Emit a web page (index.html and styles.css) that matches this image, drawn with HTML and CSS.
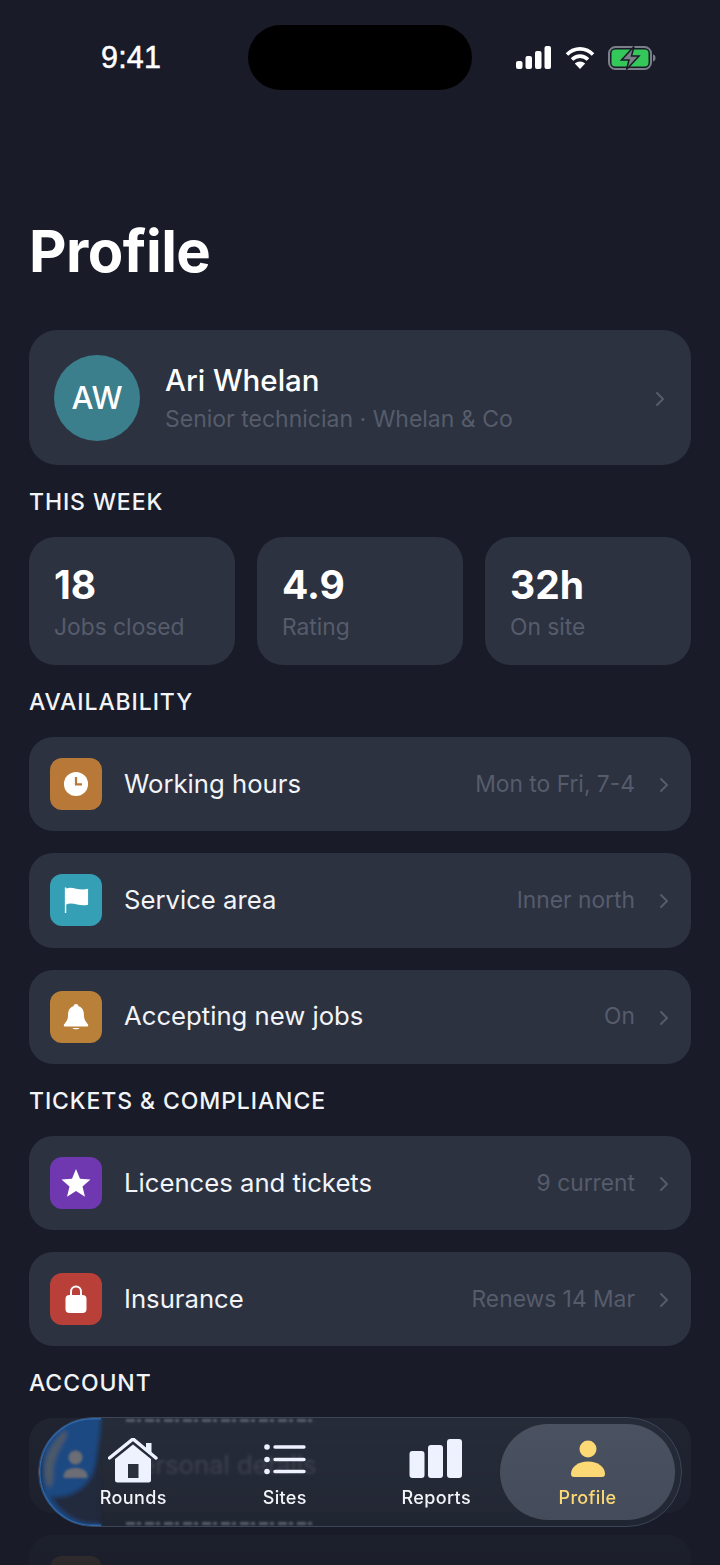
FILE: index.html
```html
<!DOCTYPE html>
<html lang="en">
<head>
    <meta charset="UTF-8">
    <meta name="viewport" content="width=device-width, initial-scale=1.0">
    <title>Profile</title>
    <link rel="stylesheet" href="styles.css">
</head>
<body>
    <div class="screen">
        <div class="status">
            <span class="time">9:41</span>
            <div class="island"></div>
            <div class="status-icons">
                <svg width="36" height="23" viewBox="0 0 36 23"><rect x="0" y="15" width="6.5" height="8" rx="2" fill="#fff"/><rect x="9.5" y="10" width="6.5" height="13" rx="2" fill="#fff"/><rect x="19" y="5" width="6.5" height="18" rx="2" fill="#fff"/><rect x="28.5" y="0" width="6.5" height="23" rx="2" fill="#fff"/></svg>
                <svg width="30" height="23" viewBox="0 0 30 23"><path d="M2 8.5C9.5 1 20.500 1 28 8.500" fill="none" stroke="#fff" stroke-width="3.600"/><path d="M7 13.500C11.800 9 18.200 9 23 13.500" fill="none" stroke="#fff" stroke-width="3.600"/><path d="M15 23L9.800 17.500C12.800 14.800 17.200 14.800 20.200 17.500Z" fill="#fff"/></svg>
                <svg width="48" height="24" viewBox="0 0 48 24"><rect x="1" y="1" width="42" height="22" rx="6.500" fill="none" stroke="#7b8088" stroke-width="2"/><rect x="3.500" y="3.500" width="37" height="17" rx="4" fill="#34c759"/><path d="M45 8.500c1.800.5 2.500 1.800 2.500 3.500s-.7 3-2.500 3.500z" fill="#7b8088"/><path d="M26 0.500L13.500 14H21L18.500 23.500L31 10H23.500Z" fill="#7b8088" stroke="#191c28" stroke-width="1.500"/></svg>
            </div>
        </div>

        <h1 class="title">Profile</h1>

        <main class="content">
            <div class="card profile-card">
                <div class="avatar">AW</div>
                <div class="profile-text">
                    <div class="profile-name">Ari Whelan</div>
                    <div class="profile-role">Senior technician · Whelan &amp; Co</div>
                </div>
                <svg class="chevron" width="10" height="16" viewBox="0 0 10 16"><path d="M2 2l6 6-6 6" fill="none" stroke="currentColor" stroke-width="2" stroke-linecap="round" stroke-linejoin="round"/></svg>
            </div>

            <div class="section-label">This week</div>
            <div class="stats">
                <div class="stat"><div class="stat-num">18</div><div class="stat-label">Jobs closed</div></div>
                <div class="stat"><div class="stat-num">4.9</div><div class="stat-label">Rating</div></div>
                <div class="stat"><div class="stat-num">32h</div><div class="stat-label">On site</div></div>
            </div>

            <div class="section-label">Availability</div>
            <div class="row">
                <div class="tile tile-clock"><svg width="26" height="26" viewBox="0 0 28 28"><circle cx="14" cy="14" r="13" fill="#fff"/><path d="M14 6.500v8h6.500" fill="none" stroke="#b87838" stroke-width="2.400"/></svg></div>
                <span class="row-label">Working hours</span>
                <span class="row-value">Mon to Fri, 7-4</span>
                <svg class="chevron" width="10" height="16" viewBox="0 0 10 16"><path d="M2 2l6 6-6 6" fill="none" stroke="currentColor" stroke-width="2" stroke-linecap="round" stroke-linejoin="round"/></svg>
            </div>
            <div class="row">
                <div class="tile tile-flag"><svg width="26" height="28" viewBox="0 0 28 30"><path d="M2 1.500h1.500V29H2z" fill="#fff"/><path d="M3 3c7-4 13 3 24 0v17c-9 3-16-4-24 0z" fill="#fff"/></svg></div>
                <span class="row-label">Service area</span>
                <span class="row-value">Inner north</span>
                <svg class="chevron" width="10" height="16" viewBox="0 0 10 16"><path d="M2 2l6 6-6 6" fill="none" stroke="currentColor" stroke-width="2" stroke-linecap="round" stroke-linejoin="round"/></svg>
            </div>
            <div class="row">
                <div class="tile tile-bell"><svg width="26" height="28" viewBox="0 0 26 28"><path d="M13 1c1.500 0 2.500 1 2.500 2.300C20 4.500 21 8.500 21 13c0 3.500 2 6 4 8.500.6.900 0 2-1 2H2c-1 0-1.600-1.100-1-2C3 19 5 16.500 5 13c0-4.500 1-8.500 5.500-9.700C10.500 2 11.500 1 13 1z" fill="#fff"/><path d="M9.500 25h7c-.8 1.800-6.200 1.800-7 0z" fill="#fff"/></svg></div>
                <span class="row-label">Accepting new jobs</span>
                <span class="row-value">On</span>
                <svg class="chevron" width="10" height="16" viewBox="0 0 10 16"><path d="M2 2l6 6-6 6" fill="none" stroke="currentColor" stroke-width="2" stroke-linecap="round" stroke-linejoin="round"/></svg>
            </div>

            <div class="section-label">Tickets &amp; compliance</div>
            <div class="row">
                <div class="tile tile-star"><svg width="30" height="28" viewBox="0 0 30 28"><path d="M15 0l4 9.800 10.500.8-8 6.800 2.500 10.300-9-5.600-9 5.600 2.500-10.300-8-6.800L11 9.800z" fill="#fff"/></svg></div>
                <span class="row-label">Licences and tickets</span>
                <span class="row-value">9 current</span>
                <svg class="chevron" width="10" height="16" viewBox="0 0 10 16"><path d="M2 2l6 6-6 6" fill="none" stroke="currentColor" stroke-width="2" stroke-linecap="round" stroke-linejoin="round"/></svg>
            </div>
            <div class="row">
                <div class="tile tile-lock"><svg width="24" height="30" viewBox="0 0 24 30"><path d="M7 13V7.500a5 5 0 0 1 10 0V13" fill="none" stroke="#fff" stroke-width="2"/><rect x="1.500" y="11" width="21" height="18" rx="4" fill="#fff"/></svg></div>
                <span class="row-label">Insurance</span>
                <span class="row-value">Renews 14 Mar</span>
                <svg class="chevron" width="10" height="16" viewBox="0 0 10 16"><path d="M2 2l6 6-6 6" fill="none" stroke="currentColor" stroke-width="2" stroke-linecap="round" stroke-linejoin="round"/></svg>
            </div>

            <div class="section-label">Account</div>
            <div class="row">
                <div class="tile"></div>
                <span class="row-label">Personal details</span>
            </div>
            <div class="row">
                <div class="tile tile-bell"></div>
            </div>
        </main>

        <div class="fade"></div>

        <nav class="tabbar">
            <svg class="refract" width="110" height="108" viewBox="0 0 110 108">
                <defs>
                    <filter id="soft" x="-20%" y="-20%" width="140%" height="140%"><feGaussianBlur stdDeviation="2"/></filter>
                    <filter id="softer" x="-20%" y="-20%" width="140%" height="140%"><feGaussianBlur stdDeviation=".9"/></filter>
                </defs>
                <g filter="url(#soft)">
                    <path d="M-4-4H62C62 14 60 24 59 36C58 52 62 66 60 80C60 92 60 100 62 112H-4Z" fill="#212a3d"/>
                    <path d="M10-4H62C62 14 60 24 58 36C56 52 52 66 36 74C24 80 14 80 4 76C2 50 2 20 10-4Z" fill="#1b4a82"/>
                    <path d="M6 66C12 84 24 98 42 104C50 106 58 106 62 106V112H10C4 96 2 80 6 66Z" fill="#1b4a82"/>
                    <path d="M24 14C16 22 8 34 6 46C5 56 7 66 10 70C14 68 14 60 14 52C15 42 20 30 27 20C29 14 27 12 24 14Z" fill="#4d5a66"/>
                </g>
                <g filter="url(#softer)" fill="#6c6d74">
                    <circle cx="36.500" cy="39.500" r="7"/>
                    <path d="M24.500 59c0-6.500 5-9 12-9s12 2.500 12 9c0 .8-.5 1-1 1h-22c-.5 0-1-.2-1-1z"/>
                </g>
                <path d="M62 .7H54A53.300 53.300 0 0 0 54 107.300H62" fill="none" stroke="#2f68aa" stroke-width="1.500"/>
            </svg>
            <div class="smear smear-top"></div>
            <div class="smear smear-bottom"></div>

            <a class="tab">
                <svg width="50" height="46" viewBox="0 1 50 46"><path d="M1.500 21L25 2l23 19" fill="none" stroke="#eef2ff" stroke-width="3.500" stroke-linecap="round" stroke-linejoin="round"/><path d="M38 6h5.500v10L38 11.500z" fill="#eef2ff"/><path d="M25 7.500L43 22v21a2.500 2.500 0 0 1-2.500 2.500h-31A2.500 2.500 0 0 1 7 43V22z" fill="#eef2ff"/><rect x="20" y="27" width="10.500" height="14" fill="#2b303d"/></svg>
                <span class="tab-label">Rounds</span>
            </a>
            <a class="tab">
                <svg width="42" height="46" viewBox="0 0 42 46"><circle cx="3" cy="9" r="2.800" fill="#eef2ff"/><circle cx="3" cy="21.500" r="2.800" fill="#eef2ff"/><circle cx="3" cy="33.500" r="2.800" fill="#eef2ff"/><path d="M11 9h29M11 21.500h29M11 33.500h29" stroke="#eef2ff" stroke-width="3.400" stroke-linecap="round"/></svg>
                <span class="tab-label">Sites</span>
            </a>
            <a class="tab">
                <svg width="54" height="46" viewBox="0 0 54 46"><rect x="0.500" y="13" width="15" height="27" rx="3" fill="#eef2ff"/><rect x="19" y="7" width="15" height="33" rx="3" fill="#eef2ff"/><rect x="38" y="1" width="15" height="39" rx="3" fill="#eef2ff"/></svg>
                <span class="tab-label">Reports</span>
            </a>
            <a class="tab tab-active">
                <svg width="36" height="46" viewBox="0 0 36 46"><circle cx="18" cy="11" r="8.500" fill="#fcd975"/><path d="M1 36c0-7 7-12.500 17-12.500S35 29 35 36c0 2-1 3-3 3H4c-2 0-3-1-3-3z" fill="#fcd975"/></svg>
                <span class="tab-label">Profile</span>
            </a>
        </nav>
    </div>
</body>
</html>
```

FILE: styles.css
```css
* {
    box-sizing: border-box;
}
body {
    margin: 0;
    background-color: #191c28;
    font-family: Inter, "Noto Sans", sans-serif;
    color: #f2f4f8;
}
.screen {
    position: relative;
    height: 1565px;
    overflow: hidden;
}
.status {
    display: flex;
    align-items: center;
    padding: 25px 64px 0 101px;
}
.time {
    width: 147px;
    flex: none;
    font-family: "Liberation Sans", sans-serif;
    font-size: 30.5px;
    -webkit-text-stroke: 0.5px #fff;
    letter-spacing: 0.2px;
    color: #fff;
}
.island {
    width: 224px;
    height: 65px;
    flex: none;
    border-radius: 33px;
    background: #000;
}
.status-icons {
    display: flex;
    align-items: center;
    gap: 13px;
    margin-left: 44px;
}
.title {
    margin: 126px 0 0 29px;
    height: 70px;
    font-size: 58px;
    line-height: 70px;
    font-weight: 700;
    letter-spacing: -0.5px;
    color: #fff;
}
.content {
    display: flex;
    flex-direction: column;
    gap: 22px;
    margin-top: 44px;
    padding: 0 29px;
}
.card, .row, .stat {
    background: #2c3240;
}
.profile-card {
    display: flex;
    align-items: center;
    height: 135px;
    padding: 0 26px 0 25px;
    border-radius: 28px;
}
.avatar {
    display: flex;
    align-items: center;
    justify-content: center;
    width: 86px;
    height: 86px;
    flex: none;
    border-radius: 50%;
    background: #3b7e8c;
    font-size: 31px;
    font-weight: 500;
    color: #fff;
}
.profile-text {
    flex: 1;
    margin-left: 25px;
}
.profile-name {
    font-size: 29.5px;
    font-weight: 500;
    line-height: 36px;
    color: #fff;
}
.profile-role {
    margin-top: 6px;
    font-size: 23px;
    line-height: 30px;
    color: #565c6b;
}
.chevron {
    flex: none;
    color: #565c6b;
}
.profile-card .chevron {
    margin-top: 2px;
}
.section-label {
    height: 28px;
    padding-top: 1px;
    line-height: 28px;
    font-size: 23px;
    font-weight: 500;
    letter-spacing: 0.9px;
    text-transform: uppercase;
    color: #f2f4f8;
}
.stats {
    display: grid;
    grid-template-columns: repeat(3, 1fr);
    gap: 22px;
}
.stat {
    height: 128px;
    padding: 25px 25px 0;
    border-radius: 26px;
}
.stat-num {
    font-size: 39px;
    line-height: 46px;
    font-weight: 700;
    color: #fff;
}
.stat-label {
    margin-top: 4px;
    font-size: 22.8px;
    line-height: 30px;
    color: #565c6b;
}
.row {
    display: flex;
    align-items: center;
    height: 94.3px;
    flex: none;
    padding: 0 22px 0 21px;
    border-radius: 24px;
}
.row .chevron {
    margin-top: 2px;
}
.tile {
    display: flex;
    align-items: center;
    justify-content: center;
    width: 52px;
    height: 52px;
    flex: none;
    border-radius: 12px;
}
.tile-clock { background: #b87838; }
.tile-flag { background: #35a0b5; }
.tile-bell { background: #b88038; }
.tile-star { background: #7038b0; }
.tile-lock { background: #b84038; }
.row-label {
    flex: 1;
    margin: 0 0 2px 22px;
    font-size: 25.7px;
    color: #f2f4f8;
}
.row-value {
    margin: 0 24px 2px 0;
    font-size: 22.8px;
    color: #565c6b;
}
.fade {
    position: absolute;
    left: 0;
    right: 0;
    bottom: 0;
    height: 175px;
    background: linear-gradient(to bottom, rgba(25,28,40,0), rgba(25,28,40,.62) 25px, rgba(25,28,40,.88) 100%);
}
.tabbar {
    position: absolute;
    left: 38px;
    top: 1417px;
    display: flex;
    align-items: center;
    width: 644px;
    height: 110px;
    padding: 0 6px 0 18.5px;
    overflow: hidden;
    border: 1.5px solid #3d4559;
    border-radius: 55px;
    background: linear-gradient(to bottom, rgba(44,50,64,.55), rgba(38,43,56,.65));
    backdrop-filter: blur(1.6px);
}
.refract {
    position: absolute;
    left: 0;
    top: 0;
}
.smear {
    position: absolute;
    left: 87px;
    width: 190px;
    height: 3px;
    background: repeating-linear-gradient(to right, #5a5f6c 0 9px, transparent 9px 11px, #5a5f6c 11px 15px, transparent 15px 19px);
    filter: blur(1px);
}
.smear-top { top: 1px; }
.smear-bottom { bottom: 1px; }
.tab {
    position: relative;
    display: flex;
    flex-direction: column;
    align-items: center;
    justify-content: center;
    width: 151.5px;
    flex: none;
    padding-top: 3px;
    color: #f2f4f8;
}
.tab svg {
    display: block;
}
.tab-label {
    margin-top: 2px;
    font-size: 18px;
    line-height: 24px;
    font-weight: 500;
    letter-spacing: 0.35px;
}
.tab-active {
    width: 175px;
    height: 96px;
    margin-left: -12px;
    border-radius: 48px;
    background: linear-gradient(to bottom, #4a5161, #444b5a);
    color: #fcd975;
}
```
